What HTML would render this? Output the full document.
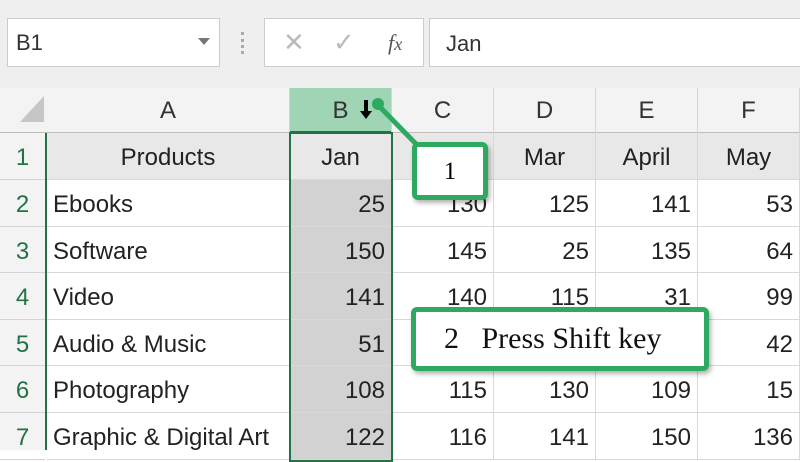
<!DOCTYPE html>
<html><head><style>
body{margin:0;width:800px;height:450px;overflow:hidden;background:#fff;font-family:"Liberation Sans Narrow","Liberation Sans",sans-serif;position:relative}
.a{position:absolute;box-sizing:border-box}
.c{position:absolute;box-sizing:border-box;font-size:24px;color:#222;line-height:50px;padding:0 6px;white-space:nowrap;overflow:hidden}
</style></head><body>
<div class="a" style="left:0;top:0;width:800px;height:88px;background:#efefef"></div>
<div class="a" style="left:7px;top:18px;width:213px;height:49px;background:#fff;border:1px solid #ccc;font-size:22px;line-height:47px;padding-left:8px;color:#333">B1</div>
<div class="a" style="left:198px;top:38px;width:0;height:0;border-left:6px solid transparent;border-right:6px solid transparent;border-top:7px solid #777"></div>
<div class="a" style="left:241px;top:32px;width:3px;height:22px;border-left:3px dotted #aaa"></div>
<div class="a" style="left:264px;top:18px;width:160px;height:49px;background:#fff;border:1px solid #ccc;font-size:26px;line-height:47px;color:#bbb"><span style="position:absolute;left:18px">✕</span><span style="position:absolute;left:68px">✓</span><span style="position:absolute;left:123px;font-family:'Liberation Serif',serif;font-style:italic;color:#555;font-size:22px">f<small>x</small></span></div>
<div class="a" style="left:429px;top:18px;width:380px;height:49px;background:#fff;border:1px solid #ccc;font-size:22px;line-height:49px;padding-left:16px;color:#333">Jan</div>
<div class="a" style="left:0;top:88px;width:800px;height:45px;background:#f3f3f3;border-bottom:1px solid #bdbdbd"></div>
<div class="a" style="left:20px;top:96px;width:0;height:0;border-left:24px solid transparent;border-bottom:26px solid #c6c6c6"></div>
<div class="a" style="left:290px;top:88px;width:102px;height:45px;background:#9fd5b4;border-bottom:2px solid #217346"></div>
<div class="a" style="left:0;top:133px;width:47px;height:317px;background:#f3f3f3;border-right:2px solid #217346"></div>
<div class="a" style="left:47px;top:133px;width:753px;height:47px;background:#e8e8e8"></div>
<div id="g"></div>
<script>
var cols=[47,290,392,494,596,698,800],letters=["A","B","C","D","E","F"];
var rows=[133,180,227,273,320,366,413,460];
var data=[["Products","Jan","","Mar","April","May"],["Ebooks","25","130","125","141","53"],["Software","150","145","25","135","64"],["Video","141","140","115","31","99"],["Audio & Music","51","","","","42"],["Photography","108","115","130","109","15"],["Graphic & Digital Art","122","116","141","150","136"]];
var h="";
for(var i=0;i<6;i++){h+='<div class="c" style="left:'+cols[i]+'px;top:88px;width:'+(cols[i+1]-cols[i])+'px;line-height:46px;text-align:center;border-right:1px solid #d4d4d4;color:#333;font-size:24px">'+letters[i]+'</div>';}
for(var r=0;r<7;r++){var t=rows[r],hh=rows[r+1]-t;
h+='<div class="c" style="left:0;top:'+t+'px;width:45px;text-align:center;color:#217346;border-bottom:1px solid #d4d4d4;height:'+hh+'px">'+(r+1)+'</div>';
for(var c=0;c<6;c++){var bg=(c==1&&r>0)?'background:#d2d2d2;':'';var al=r==0?'text-align:center;':(c==0?'':'text-align:right;');
h+='<div class="c" style="'+bg+al+'left:'+cols[c]+'px;top:'+t+'px;width:'+(cols[c+1]-cols[c])+'px;height:'+hh+'px;border-right:1px solid #d8d8d8;border-bottom:1px solid #d8d8d8">'+data[r][c].replace('&','&amp;')+'</div>';}}
document.getElementById('g').innerHTML=h;
</script>
<div class="a" style="left:289px;top:132px;width:104px;height:330px;border:2px solid #217346"></div>
<svg class="a" style="left:0;top:0" width="800" height="450"><path d="M364 100v11h-4l6 8 6-8h-4v-11z" fill="#000"/><line x1="377" y1="104" x2="420" y2="148" stroke="#2eaa60" stroke-width="5"/><circle cx="378" cy="104" r="6" fill="#2eaa60"/></svg>
<div class="a" style="left:412px;top:142px;width:76px;height:58px;background:#fff;border:5px solid #2eaa60;border-radius:6px;box-shadow:2px 3px 5px rgba(0,0,0,.3);font-family:'Liberation Serif',serif;font-size:25px;text-align:center;line-height:50px">1</div>
<div class="a" style="left:411px;top:307px;width:298px;height:64px;background:#fff;border:5px solid #2eaa60;border-radius:6px;box-shadow:2px 3px 5px rgba(0,0,0,.3);font-family:'Liberation Serif',serif;font-size:30px;line-height:54px;padding-left:28px;color:#111">2&nbsp;&nbsp;&nbsp;Press Shift key</div>
</body></html>
